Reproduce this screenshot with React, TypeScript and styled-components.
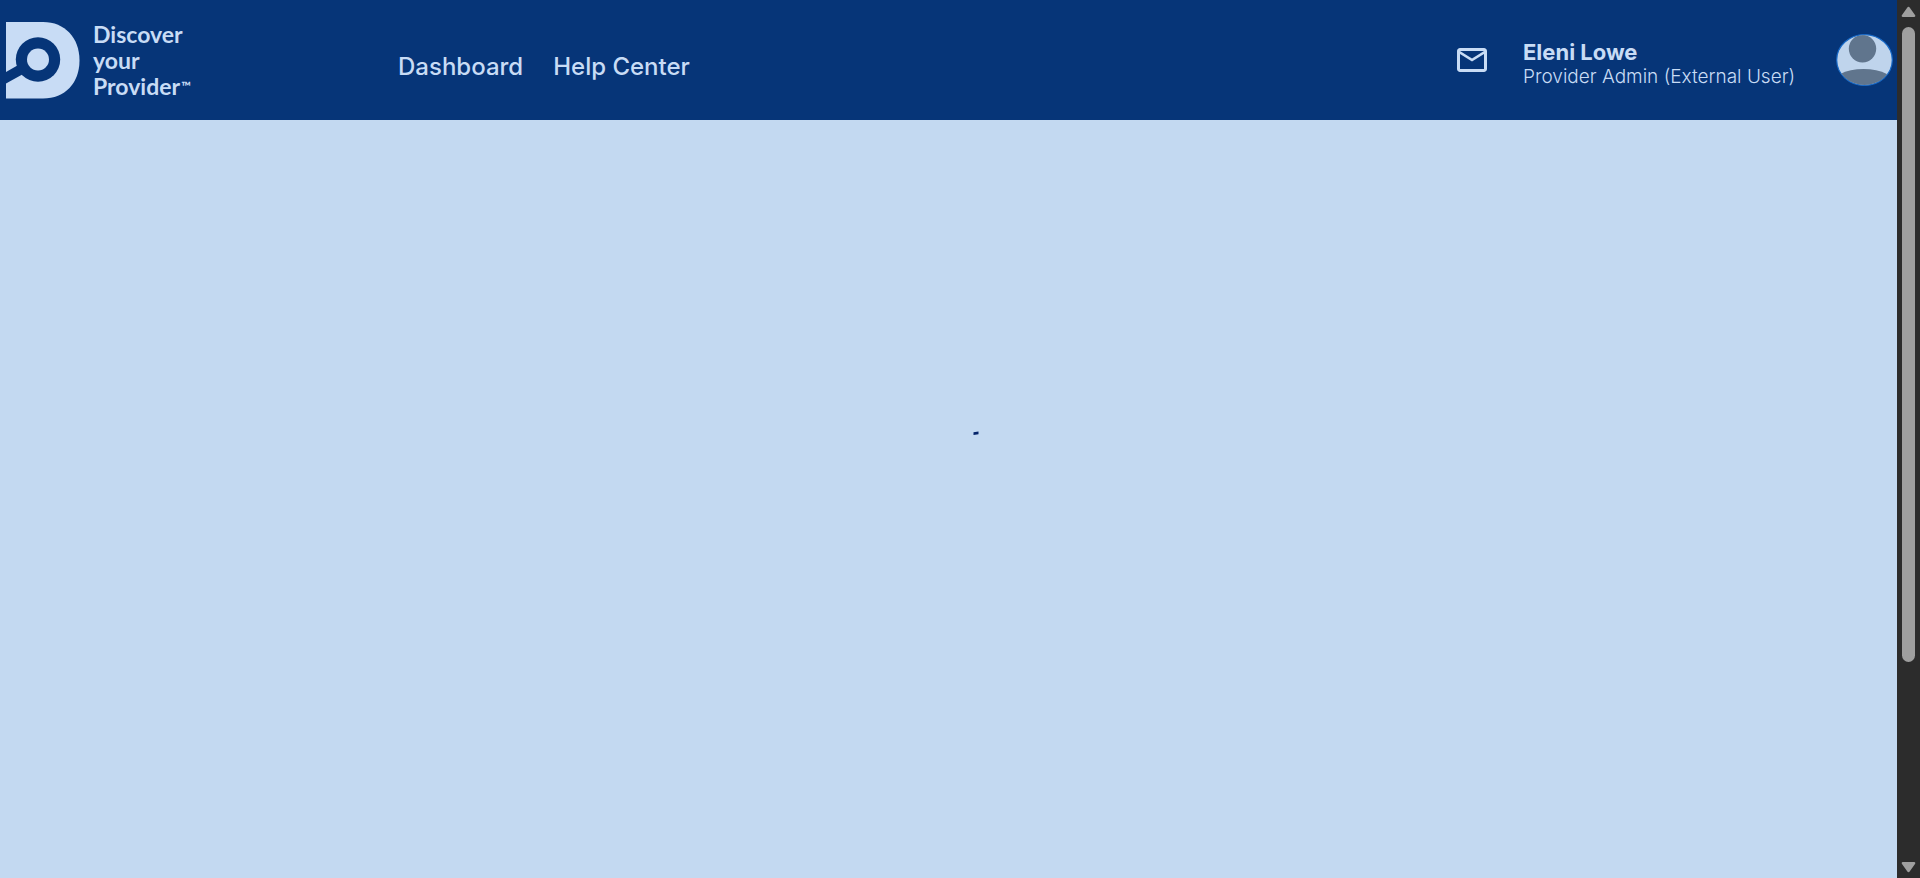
import React from "react";
import styled, { createGlobalStyle } from "styled-components";
import { MdMailOutline } from "react-icons/md";

const navy = "#063578";
const ice = "#c8dcf5";
const sky = "#c3d9f1";

const GlobalStyle = createGlobalStyle`
  *, *::before, *::after { box-sizing: border-box; }
  body {
    margin: 0;
    background: ${sky};
    font-family: Inter, "Open Sans", sans-serif;
  }
`;

const Shell = styled.div`
  display: flex;
  height: 100vh;
`;

const Page = styled.div`
  flex: 1;
  min-width: 0;
  display: flex;
  flex-direction: column;
`;

const Header = styled.header`
  display: flex;
  align-items: center;
  height: 120px;
  padding: 0 4px 0 6px;
  background: ${navy};
  color: ${ice};
`;

const Brand = styled.a`
  display: flex;
  align-items: center;
  gap: 13px;
  width: 392px;
  color: inherit;
  text-decoration: none;
`;

const BrandName = styled.span`
  font-family: Lato, sans-serif;
  font-size: 23px;
  font-weight: 700;
  line-height: 26px;
  white-space: nowrap;
`;

const TradeMark = styled.span`
  font-size: 13px;
  line-height: 1;
  vertical-align: 4px;
  margin-left: 1px;
`;

const Nav = styled.nav`
  display: flex;
  gap: 30px;
  padding-top: 14px;
`;

const NavLink = styled.a`
  color: inherit;
  font-size: 24px;
  font-weight: 500;
  line-height: 30px;
  text-decoration: none;
  white-space: nowrap;
`;

const Account = styled.div`
  display: flex;
  align-items: center;
  margin-left: auto;
`;

const IconButton = styled.button`
  display: flex;
  padding: 0;
  border: 0;
  background: none;
  color: inherit;
  cursor: pointer;
`;

const User = styled.div`
  width: 280px;
  margin: 0 33px;
  padding-top: 8px;
  white-space: nowrap;
`;

const UserName = styled.div`
  font-size: 22px;
  font-weight: 700;
  line-height: 26px;
`;

const UserRole = styled.div`
  font-size: 19px;
  font-weight: 300;
  line-height: 24px;
`;

const Main = styled.main`
  flex: 1;
  display: flex;
  justify-content: center;
  align-items: flex-start;
  padding-top: 283px;
`;

const ScrollRail = styled.div`
  display: flex;
  flex-direction: column;
  align-items: center;
  width: 23px;
  padding: 6px 0 5px;
  background: #2c2c2c;
`;

const ScrollTrack = styled.div`
  flex: 1;
  width: 13px;
  margin: 9px 0;
`;

const ScrollThumb = styled.div`
  height: 77%;
  border-radius: 7px;
  background: #9f9f9f;
`;

const LogoMark = () => (
  <svg width="74" height="77" viewBox="0 0 74 77" aria-hidden="true">
    <path d="M0 0H37C59 0 73.500 16 73.500 38.500S59 76.500 37 76.500H0Z" fill={ice} />
    <path d="M-1 50.500L14 42L19 51L-1 62Z" fill={navy} />
    <circle cx="32" cy="37.500" r="22.200" fill={navy} />
    <circle cx="32" cy="37.500" r="11" fill={ice} />
  </svg>
);

const Avatar = () => (
  <svg width="57" height="52" viewBox="0 0 57 52" aria-hidden="true">
    <defs>
      <clipPath id="avatar-edge">
        <ellipse cx="28.500" cy="26" rx="27.500" ry="25" />
      </clipPath>
    </defs>
    <ellipse cx="28.500" cy="26" rx="27.800" ry="25.400" fill="#bfd4ec" stroke="#1769c7" strokeWidth="1.200" />
    <g clipPath="url(#avatar-edge)" fill="#60758d">
      <circle cx="26.500" cy="14.700" r="13.700" />
      <ellipse cx="27.500" cy="52" rx="33" ry="17" />
    </g>
  </svg>
);

const Spinner = () => (
  <svg width="60" height="60" viewBox="0 0 60 60" role="img" aria-label="Loading">
    <path d="M54.500 29.300L59.500 28.500V31.300L54.500 32Z" fill="#04246a" />
  </svg>
);

const Arrow = ({ down = false }: { down?: boolean }) => (
  <svg width="15" height="12" viewBox="0 0 15 12" aria-hidden="true">
    <path
      d={
        down
          ? "M2 1H13Q15 1 14 3L9 10Q7.500 12.500 6 10L1 3Q0 1 2 1Z"
          : "M2 11H13Q15 11 14 9L9 2Q7.500 -0.500 6 2L1 9Q0 11 2 11Z"
      }
      fill="#9f9f9f"
    />
  </svg>
);

export default function App() {
  return (
    <>
      <GlobalStyle />
      <Shell>
        <Page>
          <Header>
            <Brand href="#home">
              <LogoMark />
              <BrandName>
                Discover
                <br />
                your
                <br />
                Provider<TradeMark>™</TradeMark>
              </BrandName>
            </Brand>
            <Nav aria-label="Main">
              <NavLink href="#dashboard">Dashboard</NavLink>
              <NavLink href="#help">Help Center</NavLink>
            </Nav>
            <Account>
              <IconButton aria-label="Messages">
                <MdMailOutline size={36} />
              </IconButton>
              <User>
                <UserName>Eleni Lowe</UserName>
                <UserRole>Provider Admin (External User)</UserRole>
              </User>
              <IconButton aria-label="Account">
                <Avatar />
              </IconButton>
            </Account>
          </Header>
          <Main>
            <Spinner />
          </Main>
        </Page>
        <ScrollRail aria-hidden="true">
          <Arrow />
          <ScrollTrack>
            <ScrollThumb />
          </ScrollTrack>
          <Arrow down />
        </ScrollRail>
      </Shell>
    </>
  );
}
